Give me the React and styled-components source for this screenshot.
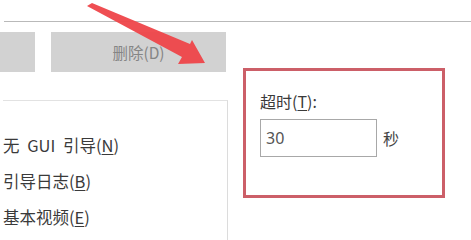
import React from 'react'
import styled, { createGlobalStyle } from 'styled-components'

const GlobalStyle = createGlobalStyle`
        html, body {
                margin: 0;
                padding: 0;
                background: #ffffff;
        }
        body {
                font-family: "Noto Sans CJK SC", "Noto Sans", sans-serif;
                color: #3c3c3c;
        }
`;

const Page = styled.div`
        position: relative;
        width: 471px;
        height: 240px;
        overflow: hidden;
        padding-top: 21px;
        box-sizing: border-box;
`;

const Frame = styled.div`
        display: flex;
        height: 219px;
        margin-left: 4px;
        border-top: 1.5px solid #b9b9b9;
`;

const LeftPane = styled.div`
        width: 224px;
        display: flex;
        flex-direction: column;
`;

const ButtonRow = styled.div`
        display: flex;
        gap: 16px;
        margin: 10px 0 0 -4px;
`;

const GreyButton = styled.div`
        width: ${(p) => p.width}px;
        height: 40px;
        background: #d2d2d2;
        display: flex;
        align-items: center;
        justify-content: center;
        font-size: 15.5px;
        color: #858585;
`;

const ListBox = styled.div`
        margin-top: 28px;
        flex: 1;
        border-top: 1px solid #e2e2e2;
        border-right: 1.5px solid #dcdcdc;
        display: flex;
        flex-direction: column;
        padding-top: 33px;
        gap: 14px;
        margin-left: -1px;
`;

const ListItem = styled.div`
        font-size: 16.5px;
        line-height: 22px;
        color: #3a3a3a;
        white-space: nowrap;
        word-spacing: 4px;
`;

const Key = styled.span`
        text-decoration: underline;
        text-underline-offset: 2px;
`;

const RightPane = styled.div`
        flex: 1;
        padding: 46px 0 0 15px;
`;

const Callout = styled.div`
        box-sizing: border-box;
        width: 202px;
        height: 130px;
        border: 3px solid #cc5f68;
        padding: 19px 0 0 14px;
`;

const Label = styled.div`
        font-size: 16px;
        line-height: 22px;
        color: #3a3a3a;
`;

const FieldRow = styled.div`
        display: flex;
        align-items: center;
        gap: 6px;
        margin-top: 7px;
`;

const Field = styled.div`
        box-sizing: content-box;
        width: 110px;
        height: 36px;
        border: 1px solid #a8a8a8;
        display: flex;
        align-items: center;
        padding-left: 5px;
        font-family: "Noto Sans", sans-serif;
        font-size: 16px;
        color: #555;
`;

const Unit = styled.span`
        font-size: 16px;
        color: #444;
`;

const ArrowLayer = styled.svg`
        position: absolute;
        left: 0;
        top: 0;
        pointer-events: none;
`;

function Arrow() {
        return (
                <ArrowLayer width="471" height="240" viewBox="0 0 471 240">
                        <polygon
                                points="87,6 92,3 190,44 192,40 205,63 178,64 182,57"
                                fill="#ee4449"
                                opacity="0.95"
                        />
                </ArrowLayer>
        )
}

export default function App() {
        return (
                <>
                        <GlobalStyle />
                        <Page>
                                <Frame>
                                        <LeftPane>
                                                <ButtonRow>
                                                        <GreyButton width={35} />
                                                        <GreyButton width={175}>删除(D)</GreyButton>
                                                </ButtonRow>
                                                <ListBox>
                                                        <ListItem>无 GUI 引导(<Key>N</Key>)</ListItem>
                                                        <ListItem>引导日志(<Key>B</Key>)</ListItem>
                                                        <ListItem>基本视频(<Key>E</Key>)</ListItem>
                                                </ListBox>
                                        </LeftPane>
                                        <RightPane>
                                                <Callout>
                                                        <Label>超时(<Key>T</Key>):</Label>
                                                        <FieldRow>
                                                                <Field>30</Field>
                                                                <Unit>秒</Unit>
                                                        </FieldRow>
                                                </Callout>
                                        </RightPane>
                                </Frame>
                                <Arrow />
                        </Page>
                </>
        )
}
